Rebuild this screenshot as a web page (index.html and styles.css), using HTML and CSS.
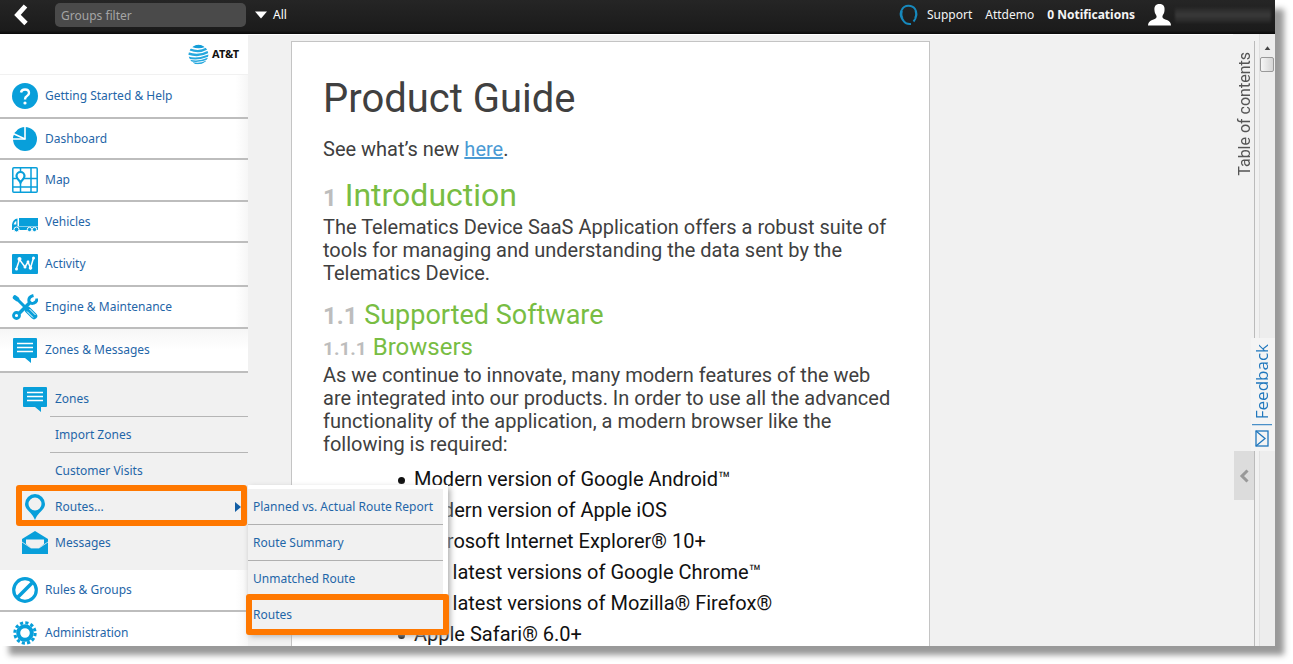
FILE: index.html
```html
<!DOCTYPE html>
<html lang="en">
<head>
<meta charset="utf-8">
<title>Product Guide</title>
<link rel="stylesheet" href="styles.css">
</head>
<body>
<svg class="defs" aria-hidden="true">
  <symbol id="chat" viewBox="0 0 26 26"><path fill="#089fda" d="M2 1h22q1 0 1 1v18q0 1-1 1h-5v5l-6-5H2q-1 0-1-1V2q0-1 1-1z"/><path stroke="#fff" stroke-width="1.300" d="M5 6.500h16M5 10.500h16M5 14.500h16"/></symbol>
</svg>
<div class="window">
  <header class="topbar">
    <button class="back" aria-label="Back"><svg width="14" height="22" viewBox="0 0 14 22"><path d="M11.500 2L3.500 11l8.500 8.500" fill="none" stroke="#fff" stroke-width="4.800"/></svg></button>
    <input class="filter" type="text" placeholder="Groups filter" aria-label="Groups filter">
    <button class="all"><svg width="12" height="8" viewBox="0 0 12 8"><path d="M0 0.500h12L6 7.500z" fill="#fff"/></svg>All</button>
    <nav class="account">
      <a class="support" href="#"><svg width="20" height="22" viewBox="0 0 20 22" fill="none" stroke="#1789bd" stroke-width="2"><path d="M5 17.500C1.500 13 0.500 9 3 5.500C5.500 0.500 13 0.500 16 5C18.500 9 17.500 14 14.500 17.500M3 7q-1.500 4 .5 7M16.500 7q1.500 4-.5 7M5 17.500q2 3 7 2.500"/></svg>Support</a>
      <a href="#">Attdemo</a>
      <a class="notes" href="#">0 Notifications</a>
      <a class="user" href="#" aria-label="User profile"><svg width="23" height="22" viewBox="0 0 23 22"><path fill="#fff" d="M11.500 0C15.500 0 17 2.500 16.500 6.500C16.500 9 15 10.500 14.500 12C14 14.500 16 15 19 16Q23 17.500 23 21.500H0Q0 17.500 4 16C7 15 9 14.500 8.500 12C8 10.500 6.500 9 6.500 6.500C6 2.500 7.500 0 11.500 0z"/></svg><span class="redacted"></span></a>
    </nav>
  </header>

  <div class="content">
    <aside class="sidebar">
      <div class="brand">
        <svg width="21" height="21" viewBox="0 0 21 21"><defs><clipPath id="globe"><circle cx="10.500" cy="10.500" r="10"/></clipPath></defs><g clip-path="url(#globe)"><path fill="#139dd8" d="M4 3Q10.500-2 17 3Q10.500 5.500 4 3z"/><g fill="none" stroke="#27a8de"><path stroke-width="2.300" d="M2 5.500Q11 9 19 4.500"/><path stroke-width="2.500" d="M0 9.500Q11 13 20 8"/><path stroke-width="2" d="M0 13.500Q10 16 21 11.500"/><path stroke-width="1.500" d="M2 16.500Q11 18.500 20 14.500M5 19Q12 20.500 18 17.500"/></g></g></svg>
        <b>AT&amp;T</b>
      </div>
      <nav>
        <ul class="menu">
          <li class="row roomy"><a href="#"><svg class="icon" viewBox="0 0 26 26"><circle cx="13" cy="13" r="13" fill="#089fda"/><path d="M9 9.500Q9.500 6.500 13 6.500Q17 6.500 17 10Q17 12 15 13Q13 14 13 16.500" fill="none" stroke="#fff" stroke-width="2.400"/><circle cx="13" cy="20" r="1.600" fill="#fff"/></svg>Getting Started &amp; Help</a></li>
          <li class="row compact"><a href="#"><svg class="icon" viewBox="0 0 26 26"><circle cx="13" cy="13" r="12" fill="#089fda"/><path d="M13 0v13H1" fill="none" stroke="#fff" stroke-width="1.600"/><path d="M13 13L1 7.500" stroke="#fff" stroke-width="1.600"/><path d="M0 0h6.500L4.500 5L1 7z" fill="#fff"/></svg>Dashboard</a></li>
          <li class="row"><a href="#"><svg class="icon" viewBox="0 0 26 26" fill="none" stroke="#089fda" stroke-width="1.500"><rect x=".8" y=".8" width="24.400" height="24.400" rx="1"/><path d="M8.500 1v4M8.500 15v10M19 1v24M1 11.500h5M11 11.500h14M1 20h24"/><path stroke-width="2.200" fill="#fff" d="M8.500 15.500C7.500 13 4.500 12 4.500 9a4 4 0 0 1 8 0C12.500 12 9.500 13 8.500 15.500z"/></svg>Map</a></li>
          <li class="row compact"><a href="#"><svg class="icon" viewBox="0 0 26 26"><path fill="#089fda" d="M7 9H26v8H7zM5.500 9.500v8H26v3.500H0V15.500Q1 10 5.500 9.500z"/><path fill="#fff" d="M1.800 15Q3 12 4.300 12v3.500H1.600z"/><g fill="#089fda" stroke="#fff"><circle cx="4.500" cy="20.500" r="2.500"/><circle cx="17.500" cy="20.500" r="2.200"/><circle cx="22.500" cy="20.500" r="2.200"/></g></svg>Vehicles</a></li>
          <li class="row roomy"><a href="#"><svg class="icon" viewBox="0 0 26 26"><rect x="0" y="3" width="26" height="20" rx="1" fill="#089fda"/><path d="M4.500 17.500L7.500 8.500L13 16L16 11L18.500 17L21.500 7" fill="none" stroke="#fff" stroke-width="1.500"/><g fill="#fff"><circle cx="4.500" cy="18" r="1.500"/><circle cx="7.500" cy="8" r="2"/><circle cx="13" cy="16" r="1.500"/><circle cx="16" cy="11" r="1.400"/><circle cx="18.500" cy="17" r="1.800"/><circle cx="21.500" cy="7" r="1.500"/></g></svg>Activity</a></li>
          <li class="row"><a href="#"><svg class="icon" viewBox="0 0 26 26" fill="none" stroke="#089fda"><path stroke-width="4.500" stroke-linecap="round" d="M3 3.500L5 5"/><path stroke-width="3" d="M5 5L14 14"/><path stroke-width="6.500" stroke-linecap="round" d="M16 16l6 6"/><path stroke="#fff" stroke-width="1" d="M15 17.500l6 6M17.500 15l6 6"/><path stroke-width="3.500" d="M6.500 20L19 7.500"/><circle cx="4.500" cy="21.500" r="3" stroke-width="2.800" fill="#fff"/><path stroke-width="3" d="M21.500 1.500Q16 3 17 7.500Q19 10.500 22 9Q25 8 25 4.500"/></svg>Engine &amp; Maintenance</a></li>
          <li class="row roomy open"><a href="#"><svg class="icon"><use href="#chat"/></svg>Zones &amp; Messages</a></li>
          <li class="group">
            <ul class="submenu">
              <li class="ruled"><a href="#"><svg class="icon"><use href="#chat"/></svg>Zones</a></li>
              <li class="ruled"><a class="plain" href="#">Import Zones</a></li>
              <li><a class="plain" href="#">Customer Visits</a></li>
              <li class="routes"><a href="#"><svg class="icon" viewBox="0 0 26 26"><path fill="#089fda" fill-rule="evenodd" d="M13 0a10 10 0 0 1 10 10C23 16 16 18 13 26C10 18 3 16 3 10A10 10 0 0 1 13 0zM13 3.500a6.500 6.500 0 1 0 0 13a6.500 6.500 0 1 0 0-13z"/></svg>Routes...<svg class="more" width="6" height="10" viewBox="0 0 6 10"><path d="M0 0l6 5-6 5z" fill="#125ea5"/></svg></a>
                <ul class="flyout">
                  <li><a href="#">Planned vs. Actual Route Report</a></li>
                  <li><a href="#">Route Summary</a></li>
                  <li><a href="#">Unmatched Route</a></li>
                  <li class="marked"><a href="#">Routes</a></li>
                </ul>
              </li>
              <li><a href="#"><svg class="icon" viewBox="0 0 26 26"><path fill="#089fda" d="M0 9L13 1l13 8v15H0z"/><path fill="#f1f1f1" d="M4 9.500h18v4.500l-5 4H9l-5-4z"/><path d="M0 12l9 6h8l9-6" fill="none" stroke="#f1f1f1" stroke-width=".8"/></svg>Messages</a></li>
            </ul>
          </li>
          <li class="row"><a href="#"><svg class="icon" viewBox="0 0 26 26" fill="none" stroke="#089fda"><circle cx="13" cy="13" r="11.300" stroke-width="3.200"/><path stroke-width="3.500" d="M20.500 5.500l-15 15"/></svg>Rules &amp; Groups</a></li>
          <li class="row roomy"><a href="#"><svg class="icon" viewBox="0 0 26 26" fill="none" stroke="#089fda"><circle cx="13" cy="13" r="6.800" stroke-width="4"/><circle cx="13" cy="13" r="10.200" stroke-width="3" stroke-dasharray="3.140 2.200"/></svg>Administration</a></li>
        </ul>
      </nav>
    </aside>

    <main class="reader">
      <article class="guide">
        <h1>Product Guide</h1>
        <p>See what’s new <a href="#">here</a>.</p>
        <h2><span>1</span> Introduction</h2>
        <p>The Telematics Device SaaS Application offers a robust suite of tools for managing and understanding the data sent by the Telematics Device.</p>
        <h3><span>1.1</span> Supported Software</h3>
        <h4><span>1.1.1</span> Browsers</h4>
        <p>As we continue to innovate, many modern features of the web are integrated into our products. In order to use all the advanced functionality of the application, a modern browser like the following is required:</p>
        <ul>
          <li>Modern version of Google Android™</li>
          <li>Modern version of Apple iOS</li>
          <li>Microsoft Internet Explorer® 10+</li>
          <li>The latest versions of Google Chrome™</li>
          <li>The latest versions of Mozilla® Firefox®</li>
          <li>Apple Safari® 6.0+</li>
        </ul>
      </article>
    </main>

    <aside class="rail">
      <span class="toc">Table of contents</span>
      <button class="pull" aria-label="Open table of contents"><svg width="10" height="14" viewBox="0 0 10 14"><path d="M8.500 1.500L3 7l5.500 5.500" fill="none" stroke="#999" stroke-width="3"/></svg></button>
    </aside>
    <div class="scrollbar"><svg width="16" height="14" viewBox="0 0 16 14"><path d="M5 9l3-4 3 4z" fill="#444"/></svg><div class="thumb"></div></div>
    <a class="feedback" href="#"><svg width="14" height="17" viewBox="0 0 14 17" fill="none" stroke="#2077bd" stroke-width="1.300"><rect x="1" y="1" width="12" height="15"/><path d="M1 1l9 7.500L1 16"/></svg><span>Feedback</span></a>
  </div>
</div>
</body>
</html>
```
FILE: styles.css
```css
* { box-sizing: border-box; }
body {
  margin: 0;
  padding: 0 18px 18px 0;
  background: #fff;
  font: 12px/18px "Noto Sans", "Open Sans", sans-serif;
  overflow: hidden;
}
ul { list-style: none; margin: 0; padding: 0; }
a { color: #1f66a8; text-decoration: none; }
button { border: 0; padding: 0; background: none; color: inherit; font: inherit; }
svg { display: block; flex: none; }
.defs { position: absolute; width: 0; height: 0; }

.window {
  display: flex;
  flex-direction: column;
  height: calc(100vh - 18px);
  background: #f1f1f1;
  box-shadow: 9px 9px 6px #999;
}

.topbar {
  display: flex;
  align-items: center;
  flex: none;
  height: 34px;
  padding: 0 4px 4px 14px;
  background: linear-gradient(#252525, #1b1b1b 90%, #080808);
  color: #fff;
}
.filter {
  width: 191px;
  height: 24px;
  margin: 0 9px 0 27px;
  padding: 0 6px;
  border: 0;
  border-radius: 5px;
  background: #4a4a4a;
  color: #fff;
  font: inherit;
}
.filter::placeholder { color: #a5a5a5; opacity: 1; }
.all { display: flex; align-items: center; gap: 6px; }
.account { display: flex; align-items: center; gap: 13px; margin-left: auto; }
.account a { color: #f4f4f4; }
.support, .user { display: flex; align-items: center; gap: 8px; }
.account .notes { font-weight: bold; }
.user { gap: 4px; }
.redacted { width: 96px; height: 16px; background: linear-gradient(#262626, #3a3a3a 50%, #242424); filter: blur(1px); }

.content { position: relative; display: flex; flex: 1; min-height: 0; overflow: hidden; }

.sidebar { position: relative; z-index: 1; flex: none; width: 248px; }
.brand {
  display: flex;
  align-items: center;
  justify-content: flex-end;
  gap: 3px;
  height: 41px;
  padding-right: 9px;
  border-bottom: 1px solid #f1f1f1;
  background: #fff;
}
.brand b { color: #111; font-size: 11px; }
.icon { width: 26px; height: 26px; }
.row { height: 42px; border-bottom: 2px solid #bdbdbd; background: linear-gradient(90deg, #fff 95%, #f6f6f6); }
.roomy { height: 44px; }
.compact { height: 41px; }
.open { background: linear-gradient(#f6f6f6, #fff 50%); }
.row a { display: flex; align-items: center; gap: 7px; height: 100%; padding-left: 12px; }

.submenu { padding: 8px 0 9px 16px; }
.submenu > li { position: relative; height: 36px; }
.submenu > li > a { display: flex; align-items: center; gap: 7px; height: 100%; padding: 0 7px 0 6px; }
.submenu .plain { padding-left: 39px; }
.ruled { background: linear-gradient(#b5b5b5, #b5b5b5) 34px 100% / 100% 1px no-repeat; }
.more { margin-left: auto; }
.routes::after, .marked::after {
  content: "";
  position: absolute;
  inset: -4px 1px -1px 0;
  border: 6px solid #ff7800;
  border-radius: 3px;
  pointer-events: none;
}
.flyout {
  position: absolute;
  left: 100%;
  top: -4px;
  width: 200px;
  padding: 4px 5px 0 0;
  background: #fff;
  box-shadow: 2px 3px 6px #aaa;
}
.flyout li { position: relative; height: 36px; border-bottom: 1px solid #b0b0b0; background: #f1f1f1; }
.flyout a { display: flex; align-items: center; height: 100%; padding-left: 5px; white-space: nowrap; }
.flyout .marked { border: 0; }
.marked::after { inset: -3px -6px -2px -2px; }

.reader { flex: 1; min-width: 0; padding: 6px 43px 0; border-top: 1px solid #fff; }
.guide {
  max-width: 639px;
  min-height: 100%;
  padding: 33px 36px 0 31px;
  border: 1px solid #c4c4c4;
  background: #fff;
  color: #404040;
  font: 20px/23px Roboto, sans-serif;
}
.guide h1, .guide h2, .guide h3, .guide h4 { margin: 0; font-weight: normal; color: #78bd43; }
.guide h1 { font-size: 40px; line-height: 48px; margin-bottom: 15px; color: #404040; }
.guide h2 { font-size: 32px; line-height: 36px; margin-top: 16px; }
.guide h3 { font-size: 27px; line-height: 32px; margin-top: 14px; }
.guide h4 { font-size: 24px; line-height: 31px; }
.guide h2 span, .guide h3 span, .guide h4 span { color: #bdbdbd; font-weight: bold; font-size: 24px; }
.guide h4 span { font-size: 19px; }
.guide p { margin: 0; }
.guide h4 + p { margin-bottom: 8px; }
.guide p a { color: #4a9ad4; text-decoration: underline; }
.guide ul { padding-left: 91px; color: #111; line-height: 31px; }
.guide li::before {
  content: "";
  display: inline-block;
  width: 7px;
  height: 7px;
  margin: 0 9px 0 -16px;
  border-radius: 50%;
  background: #111;
  vertical-align: 2px;
}

.rail {
  position: relative;
  flex: none;
  width: 22px;
  margin: 7px 4px 0 0;
  border-right: 1px solid #bbb;
}
.toc {
  display: block;
  margin: 11px 0 0 2px;
  color: #555;
  font: 16px/20px Roboto, sans-serif;
  writing-mode: vertical-rl;
  transform: rotate(180deg);
}
.pull {
  position: absolute;
  top: 410px;
  right: 0;
  display: grid;
  place-items: center;
  width: 20px;
  height: 49px;
  background: #dcdcdc;
}
.scrollbar { flex: none; width: 16px; padding-top: 7px; border-left: 1px solid #e0e0e0; background: #ededed; }
.scrollbar svg { width: 15px; }
.thumb { height: 15px; margin: 2px 1px 0 0; border: 1px solid #999; border-radius: 2px; background: linear-gradient(90deg, #f6f6f6, #d5d5d5); }
.feedback {
  position: absolute;
  top: 304px;
  right: 0;
  display: flex;
  flex-direction: column-reverse;
  align-items: center;
  gap: 5px;
  width: 24px;
  padding: 6px 2px 4px 0;
  background: #f4f4f4;
  color: #2077bd;
  font: 17px/20px "Open Sans", sans-serif;
}
.feedback span { padding-top: 5px; border-top: 1px solid #2077bd; writing-mode: vertical-rl; transform: rotate(180deg); }
```
